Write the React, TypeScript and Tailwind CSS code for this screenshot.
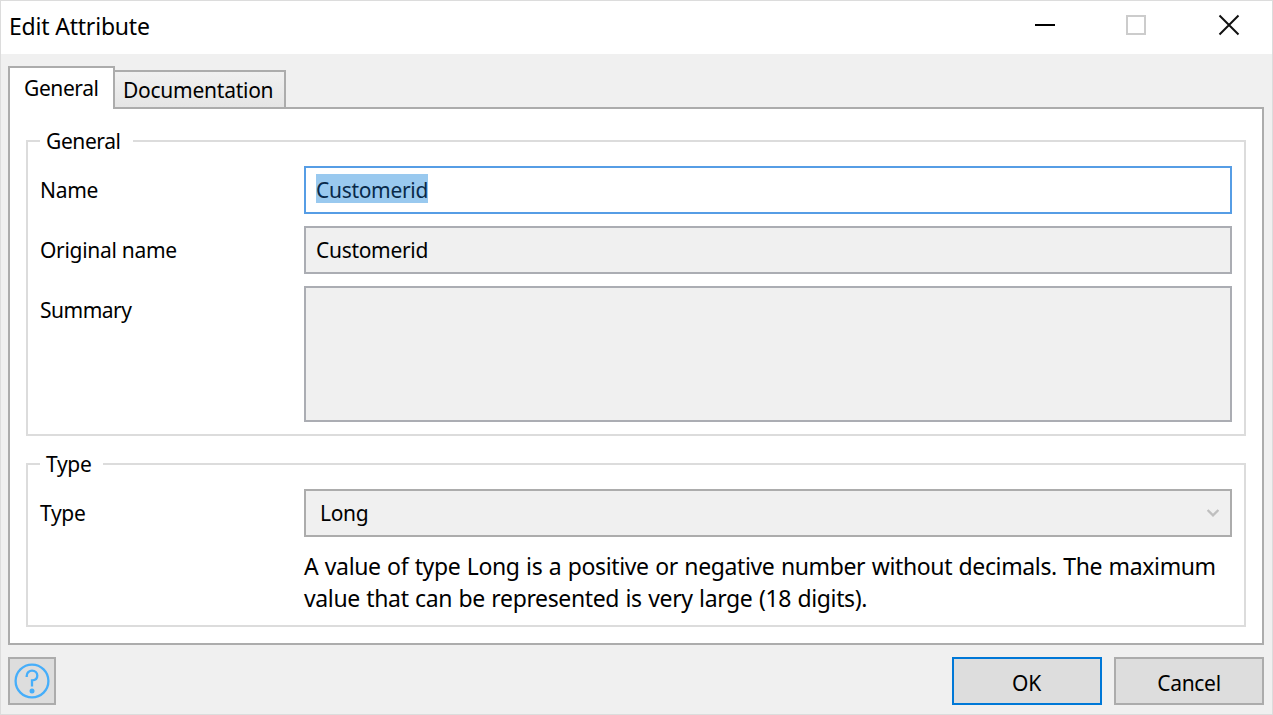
import type { ReactNode } from "react";

function Group({ title, gap, className, children }: { title: string; gap: string; className: string; children: ReactNode }) {
  return (
    <section className={`flex flex-col ${className}`}>
      <div className="flex h-[22px] items-center">
        <div className="h-[2px] w-[14px] bg-[#dcdcdc]" />
        <h2 className={`pl-[6px] leading-[22px] ${gap}`}>{title}</h2>
        <div className="h-[2px] flex-1 bg-[#dcdcdc]" />
      </div>
      <div className="-mt-[10px] flex-1 border-2 border-t-0 border-[#dcdcdc] pl-3 pr-3">{children}</div>
    </section>
  );
}

function Row({ label, labelClass = "", children }: { label: string; labelClass?: string; children: ReactNode }) {
  return (
    <div className="flex items-start">
      <label className={`w-[264px] leading-[48px] ${labelClass}`}>{label}</label>
      {children}
    </div>
  );
}

export default function App() {
  return (
    <div className="flex h-[715px] w-[1273px] flex-col overflow-hidden border border-[#dcdcdc] bg-[#f0f0f0] font-['Noto_Sans','Open_Sans',sans-serif] text-[21px] tracking-[-0.3px] text-black">
      <header className="flex h-[53px] shrink-0 items-center bg-white pl-2 pr-[32px]">
        <h1 className="flex-1 pb-1 text-[23px] leading-8 tracking-[-0.2px]">Edit Attribute</h1>
        <div className="flex items-center pb-[5px]">
          <div className="mr-[71px] h-[2px] w-[20px] bg-black" />
          <div className="mr-[72px] h-[20px] w-[20px] border-2 border-[#cccccc]" />
          <svg width="22" height="22" viewBox="0 0 22 22" fill="none" stroke="#111" strokeWidth="2">
            <path d="M1.5 1.5 20.5 20.5M20.5 1.5 1.5 20.5" />
          </svg>
        </div>
      </header>

      <main className="pl-[7px] pr-2 pt-3">
        <div className="relative z-10 -mb-[2px] flex items-end">
          <div className="h-[43px] w-[107px] border-2 border-b-0 border-[#acacac] bg-white pl-[14px] leading-[41px] tracking-[-0.4px]">General</div>
          <div className="-ml-[2px] h-[39px] w-[173px] border-2 border-[#acacac] bg-linear-to-b from-[#f0f0f0] to-[#e5e5e5] pl-2 leading-[36px] tracking-[-0.25px]">
            Documentation
          </div>
        </div>
        <div className="h-[538px] border-2 border-[#acacac] bg-white px-4 pt-[21px]">
          <Group title="General" gap="w-[93px] tracking-[-0.4px]" className="h-[306px]">
            <div className="flex flex-col gap-3 pt-[24px]">
              <Row label="Name">
                <div className="flex h-12 flex-1 items-center border-2 border-[#569de5] pl-[10px]">
                  <span className="mb-[3px] h-[29px] w-[112px] bg-[#99c9ef] leading-[33px] text-[#08294a]">Customerid</span>
                </div>
              </Row>
              <Row label="Original name">
                <div className="h-12 flex-1 border-2 border-[#abadb3] bg-[#f0f0f0] pl-[10px] leading-[44px]">Customerid</div>
              </Row>
              <Row label="Summary" labelClass="tracking-[-0.5px]">
                <div className="h-[136px] flex-1 border-2 border-[#abadb3] bg-[#f0f0f0]" />
              </Row>
            </div>
          </Group>
          <Group title="Type" gap="w-[63px]" className="mt-[17px] h-[174px]">
            <div className="pt-[24px]">
              <Row label="Type">
                <div className="flex h-12 flex-1 items-center justify-between border-2 border-[#acacac] bg-[#f0f0f0] pl-[14px] pr-[11px]">
                  <span className="leading-[44px]">Long</span>
                  <svg width="12" height="9" viewBox="0 0 12 9" fill="none" stroke="#bfbfbf" strokeWidth="2.4">
                    <path d="M.6 1 6 6.4 11.4 1" />
                  </svg>
                </div>
              </Row>
              <p className="ml-[264px] mt-[13px] whitespace-nowrap text-[23px] leading-8 tracking-[-0.37px] [word-spacing:0.85px]">
                A value of type Long is a positive or negative number without decimals. The maximum
                <br />
                value that can be represented is very large (18 digits).
              </p>
            </div>
          </Group>
        </div>
      </main>

      <footer className="flex gap-3 pl-[7px] pr-2 pt-3">
        <button className="mr-auto flex h-12 w-12 items-center justify-center border-2 border-[#acacac] bg-[#dddddd]">
          <svg width="36" height="36" viewBox="0 0 36 36" fill="none" stroke="#46aefa" strokeWidth="2.3">
            <circle cx="18" cy="18" r="16.4" />
            <path d="M12.7 13.9V12.9A5.3 5.3 0 0 1 18 7.6C21.2 7.6 23.3 9.8 23.3 12.6C23.3 15.6 21.3 17.4 18 17.4V23.6" />
            <circle cx="18" cy="28" r="2.5" fill="#46aefa" stroke="none" />
          </svg>
        </button>
        <button className="h-12 w-[150px] border-2 border-[#0078d7] bg-[#dddddd] pt-1 pr-px leading-[40px]">OK</button>
        <button className="h-12 w-[150px] border-2 border-[#acacac] bg-[#dddddd] pt-1 leading-[40px]">Cancel</button>
      </footer>
    </div>
  );
}
